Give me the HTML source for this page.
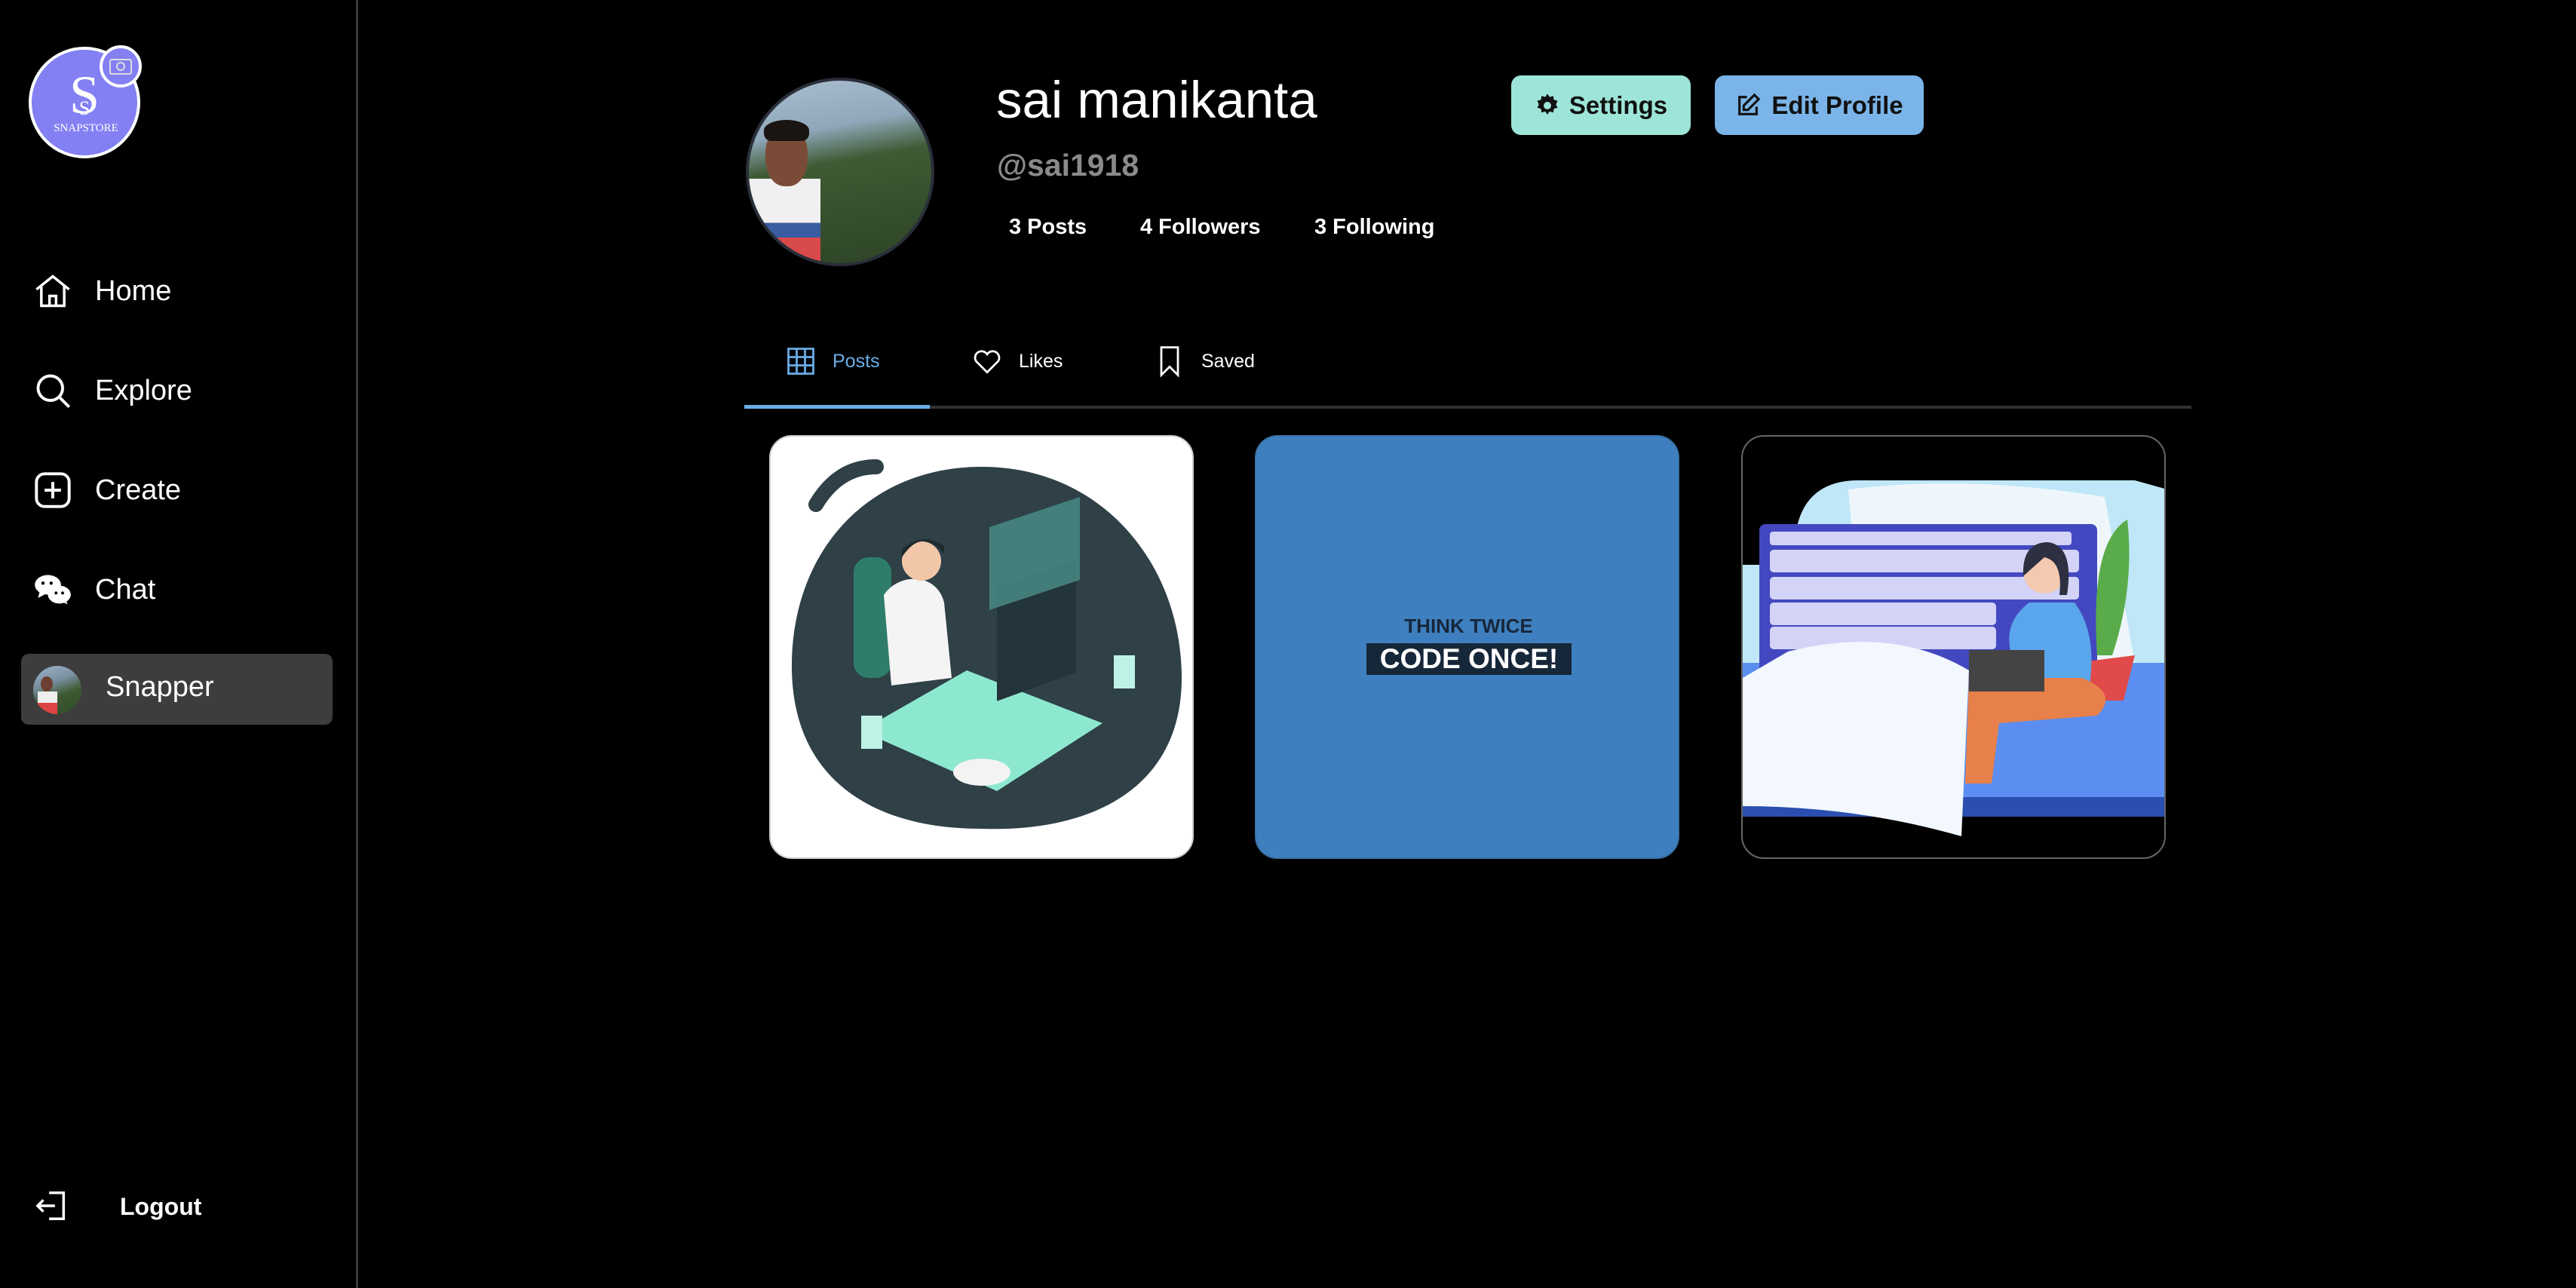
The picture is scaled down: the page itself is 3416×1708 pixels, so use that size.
<!DOCTYPE html>
<html><head><meta charset="utf-8"><style>
*{margin:0;padding:0;box-sizing:border-box}
body{width:3416px;height:1708px;background:#000;font-family:"Liberation Sans",sans-serif;color:#fff;position:relative;overflow:hidden}
.abs{position:absolute}
.side{left:0;top:0;width:475px;height:1708px;border-right:3px solid #3a3a3a}
.nav{left:44px;height:60px;display:flex;align-items:center;font-size:38px}
.nav svg{width:52px;height:52px;margin-right:30px}
.btn{top:100px;height:79px;border-radius:13px;color:#111;font-weight:bold;font-size:33px;display:flex;align-items:center;justify-content:center}
.tab{top:455px;height:48px;display:flex;align-items:center;font-size:25px}
.tab svg{width:44px;height:44px;margin-right:20px}
.card{top:577px;width:563px;height:562px;border-radius:30px;overflow:hidden}
</style></head><body>
<div class="abs side"></div>
<svg class="abs" style="left:36px;top:58px" width="160" height="160" viewBox="0 0 160 160">
<circle cx="76" cy="78" r="72" fill="#8280f2" stroke="#fff" stroke-width="4"/>
<text x="76" y="92" text-anchor="middle" font-family="Liberation Serif,serif" font-size="72" fill="#fff">S</text>
<text x="76" y="94" text-anchor="middle" font-family="Liberation Serif,serif" font-size="26" fill="#fff">S</text>
<text x="78" y="116" text-anchor="middle" font-family="Liberation Serif,serif" font-size="15" fill="#fff">SNAPSTORE</text>
<circle cx="124" cy="30" r="26" fill="#8280f2" stroke="#fff" stroke-width="4"/>
<rect x="110" y="21" width="28" height="19" rx="2" fill="none" stroke="#ddd" stroke-width="2"/>
<circle cx="124" cy="30" r="5" fill="none" stroke="#ddd" stroke-width="2"/>
</svg>
<div class="abs nav" style="top:356px"><svg viewBox="0 0 24 24" fill="none" stroke="#fff" stroke-width="1.6"><path d="M2 11 12 3l10 8M5 9v12h14V9M10 21v-6h4v6"/></svg>Home</div>
<div class="abs nav" style="top:488px"><svg viewBox="0 0 24 24" fill="none" stroke="#fff" stroke-width="1.8"><circle cx="10.5" cy="10.5" r="7.5"/><path d="M16 16l6 6"/></svg>Explore</div>
<div class="abs nav" style="top:620px"><svg viewBox="0 0 24 24" fill="none" stroke="#fff" stroke-width="1.8"><rect x="2" y="2" width="20" height="20" rx="5"/><path d="M12 7v10M7 12h10"/></svg>Create</div>
<div class="abs nav" style="top:752px"><svg viewBox="0 0 24 24" fill="#fff"><ellipse cx="9" cy="9" rx="8" ry="6"/><path d="M4 13l-1 4 4-2z"/><ellipse cx="16" cy="15" rx="7" ry="5.5"/><path d="M20 18l1 3-4-2z"/><circle cx="6" cy="8" r="1" fill="#000"/><circle cx="11" cy="8" r="1" fill="#000"/><circle cx="14" cy="14" r=".9" fill="#000"/><circle cx="18" cy="14" r=".9" fill="#000"/></svg>Chat</div>
<div class="abs" style="left:28px;top:867px;width:413px;height:94px;background:#3d3d3d;border-radius:10px"></div>
<div class="abs" style="left:44px;top:883px;width:64px;height:64px;border-radius:50%;background:linear-gradient(160deg,#9fb6cc 0%,#7a8fa0 35%,#3e5a32 60%,#2f4a2a 100%);overflow:hidden"><div style="position:absolute;left:6px;top:34px;width:26px;height:30px;background:linear-gradient(#eee 50%,#d44 50%)"></div><div style="position:absolute;left:10px;top:14px;width:16px;height:20px;border-radius:50%;background:#6b4030"></div></div>
<div class="abs" style="left:140px;top:890px;font-size:38px">Snapper</div>
<svg class="abs" style="left:46px;top:1576px" width="46" height="46" viewBox="0 0 24 24" fill="none" stroke="#fff" stroke-width="1.8"><path d="M10 3h10v18H10M2 12h12M6 8l-4 4 4 4"/></svg>
<div class="abs" style="left:159px;top:1582px;font-size:32px;font-weight:bold">Logout</div>

<div class="abs" style="left:989px;top:103px;width:250px;height:250px;border-radius:50%;border:4px solid #2a2f3a;background:linear-gradient(170deg,#a9bed0 0%,#90a8bb 28%,#3f5a34 45%,#2c4426 100%);overflow:hidden">
<div style="position:absolute;left:0;top:130px;width:95px;height:130px;background:linear-gradient(#f0f0f0 0 45%,#3a5ca0 45% 60%,#d94a4a 60%)"></div>
<div style="position:absolute;left:22px;top:60px;width:56px;height:80px;border-radius:45%;background:#7a4c38"></div>
<div style="position:absolute;left:20px;top:52px;width:60px;height:28px;border-radius:50% 50% 10px 10px;background:#1a1412"></div></div>
<div class="abs" style="left:1321px;top:93px;font-size:69px">sai manikanta</div>
<div class="abs" style="left:1322px;top:196px;font-size:41px;font-weight:bold;color:#8a8a8a">@sai1918</div>
<div class="abs" style="left:1338px;top:285px;font-size:29px;font-weight:bold">3 Posts</div>
<div class="abs" style="left:1512px;top:285px;font-size:29px;font-weight:bold">4 Followers</div>
<div class="abs" style="left:1743px;top:285px;font-size:29px;font-weight:bold">3 Following</div>
<div class="abs btn" style="left:2004px;width:238px;background:#9de5d8"><svg width="34" height="34" viewBox="0 0 24 24" style="margin-right:12px"><path fill="#111" d="M12 1l2 3 3.5-1 .5 3.5 3.5 1-1.5 3.5 1.5 3-3.5 1-.5 3.5-3.5-1-2 3-2-3-3.5 1-.5-3.5-3.5-1 1.5-3-1.5-3.5 3.5-1L6.5 3 10 4z"/><circle cx="12" cy="12" r="3.5" fill="#9de5d8"/></svg>Settings</div>
<div class="abs btn" style="left:2274px;width:277px;background:#7ab4e8"><svg width="34" height="34" viewBox="0 0 24 24" fill="none" stroke="#111" stroke-width="2.2" style="margin-right:14px"><path d="M11 4H4v16h16v-7M18 2l4 4-10 10H8v-4z"/></svg>Edit Profile</div>

<div class="abs tab" style="left:1040px;color:#6aaee8"><svg viewBox="0 0 24 24" fill="none" stroke="#6aaee8" stroke-width="1.5"><rect x="3" y="3" width="18" height="18"/><path d="M9 3v18M15 3v18M3 9h18M3 15h18"/></svg>Posts</div>
<div class="abs tab" style="left:1287px"><svg viewBox="0 0 24 24" fill="none" stroke="#fff" stroke-width="1.5"><path d="M12 20 4 12a4.5 4.5 0 0 1 8-5 4.5 4.5 0 0 1 8 5z"/></svg>Likes</div>
<div class="abs tab" style="left:1529px"><svg viewBox="0 0 24 24" fill="none" stroke="#fff" stroke-width="1.5"><path d="M6 2h12v20l-6-6-6 6z"/></svg>Saved</div>
<div class="abs" style="left:987px;top:538px;width:1919px;height:4px;background:#333"></div>
<div class="abs" style="left:987px;top:537px;width:246px;height:5px;background:#6aaee8"></div>

<div class="abs card" style="left:1020px;background:#fff;border:2px solid #ccc">
<svg width="563" height="562" viewBox="0 0 563 562">
<path d="M60 90 Q90 40 140 40" stroke="#2f4047" stroke-width="20" fill="none" stroke-linecap="round"/>
<path d="M280 40 C440 40 545 170 545 320 C545 470 420 525 280 520 C130 520 26 450 28 300 C30 150 130 40 280 40Z" fill="#2f4047"/>
<path d="M120 390 L300 470 L440 380 L260 310Z" fill="#8de8d0"/>
<rect x="300" y="200" width="105" height="150" fill="#23343a" transform="skewY(-20) translate(0 110)"/>
<path d="M290 120 L410 80 L410 190 L290 230Z" fill="#4a8f88" opacity=".8"/>
<rect x="110" y="160" width="50" height="160" rx="20" fill="#2e7d6a"/>
<path d="M150 210 C170 180 220 180 230 220 L240 320 L160 330Z" fill="#f4f4f4"/>
<circle cx="200" cy="165" r="26" fill="#f2c7a8"/>
<path d="M174 160 Q200 120 230 155 L230 145 Q200 125 174 150Z" fill="#1e2b2e"/>
<ellipse cx="280" cy="445" rx="38" ry="18" fill="#f3f3f3"/>
<rect x="120" y="370" width="28" height="44" fill="#bff2e6"/>
<rect x="455" y="290" width="28" height="44" fill="#bff2e6"/>
</svg></div>
<div class="abs card" style="left:1664px;background:#3e80bf;border:2px solid #3a70a6">
<div style="position:absolute;left:0;width:563px;top:236px;text-align:center;font-size:26px;font-weight:bold;color:#17273a">THINK TWICE</div>
<div style="position:absolute;left:146px;width:272px;top:274px;height:42px;background:#17273a;text-align:center;font-size:37px;line-height:42px;font-weight:bold;color:#fff">CODE ONCE!</div>
</div>
<div class="abs card" style="left:2309px;background:#000;border:2px solid #666">
<svg width="563" height="562" viewBox="0 0 563 562">
<path d="M70 130 Q80 60 150 58 L520 58 L563 70 L563 500 L0 500 L0 170 L70 170Z" fill="#bfe7f7"/>
<path d="M140 70 Q300 50 480 80 L520 300 L160 300Z" fill="#eef6fc"/>
<rect x="0" y="300" width="563" height="200" fill="#5b8ef0"/>
<rect x="0" y="478" width="563" height="26" fill="#2a4fb0"/>
<rect x="22" y="116" width="448" height="205" rx="8" fill="#4448c0"/>
<g fill="#d3d3f8">
<rect x="36" y="126" width="400" height="18" rx="4"/>
<rect x="36" y="150" width="410" height="30" rx="5"/>
<rect x="36" y="186" width="410" height="30" rx="5"/>
<rect x="36" y="220" width="300" height="30" rx="5"/>
<rect x="36" y="252" width="300" height="30" rx="5"/>
</g>
<path d="M440 300 L520 290 L505 350 L450 350Z" fill="#e04a4a"/>
<path d="M470 290 Q460 140 510 110 Q520 200 490 290Z" fill="#5aab4a"/>
<path d="M60 285 Q200 250 300 310 L290 530 Q150 490 0 490 L0 320Z" fill="#f2f8fe"/>
<path d="M360 300 Q340 250 380 220 L440 220 Q470 260 460 330 L360 340Z" fill="#5aa6ec"/>
<circle cx="400" cy="180" r="28" fill="#f3c9b0"/>
<path d="M372 185 Q370 140 405 140 Q440 145 430 210 L420 210 Q425 165 400 160Z" fill="#2d3040"/>
<path d="M300 320 L450 320 Q500 340 470 370 L340 380 L330 460 L295 460Z" fill="#e7804a"/>
<rect x="300" y="283" width="100" height="55" fill="#444"/>
</svg></div>
</body></html>
